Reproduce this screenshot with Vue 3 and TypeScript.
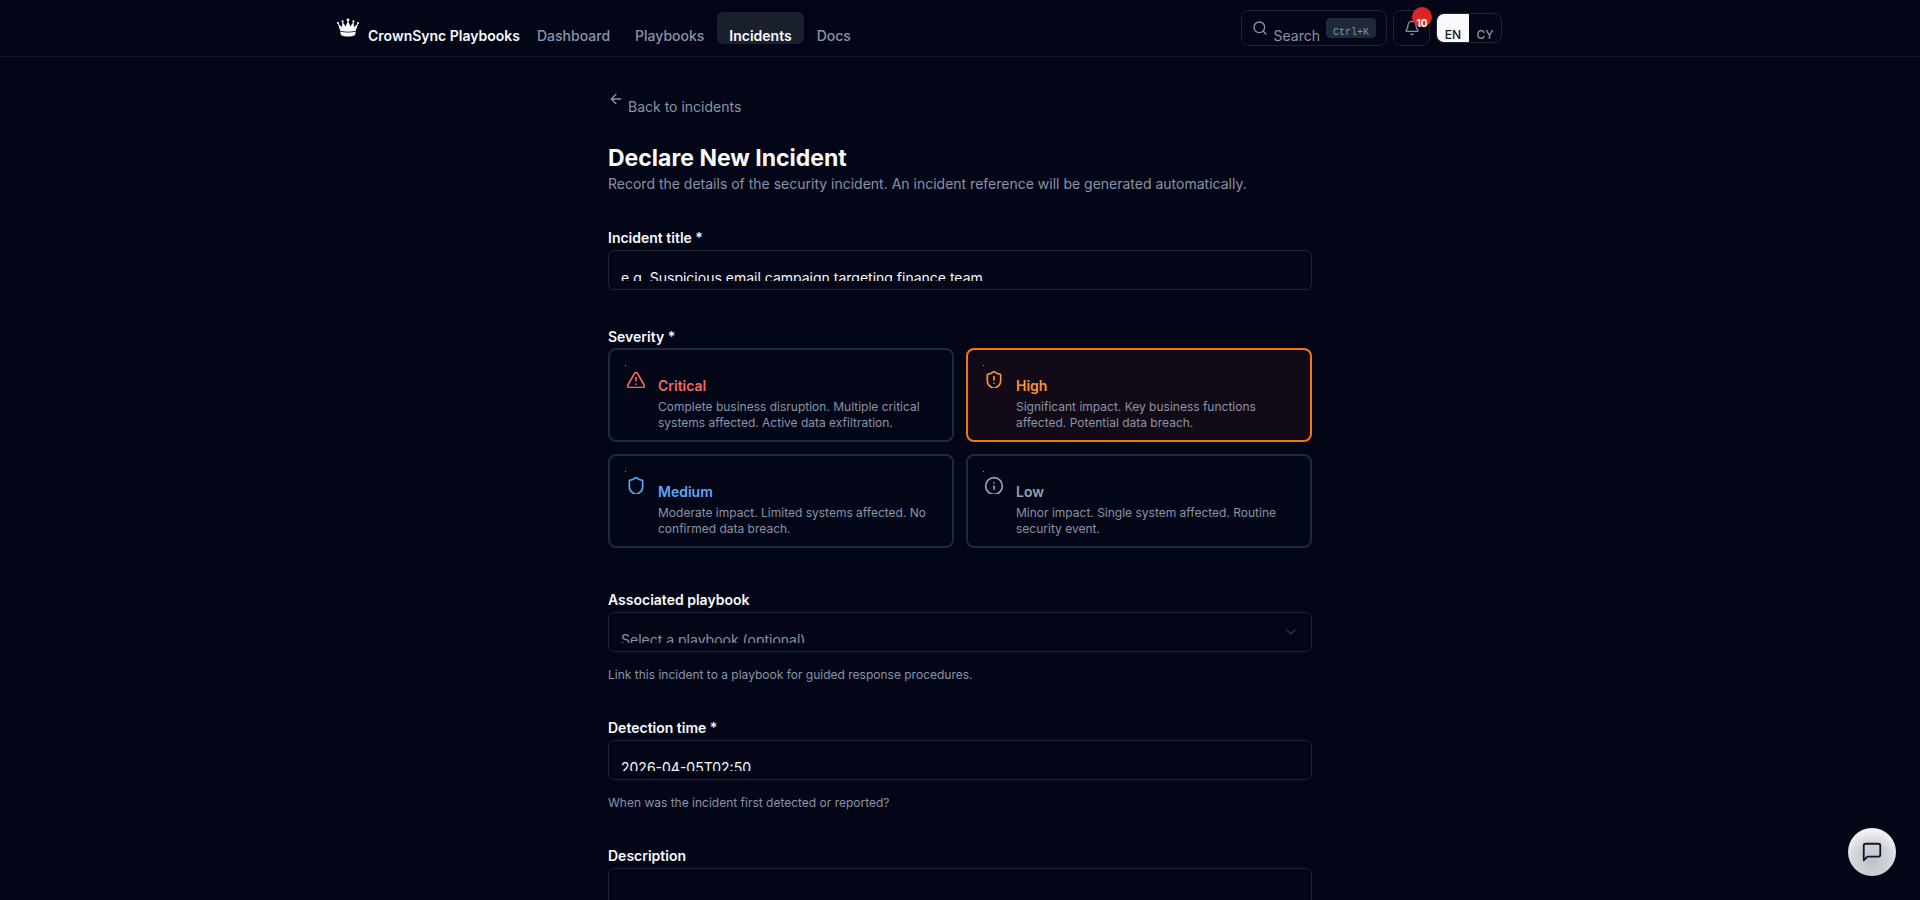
<script setup lang="ts">
import { ref } from 'vue'

interface Severity {
  id: string
  name: string
  text: string
}

const navLinks = ['Dashboard', 'Playbooks', 'Incidents', 'Docs']
const activeLink = 'Incidents'

const severities: Severity[] = [
  { id: 'critical', name: 'Critical', text: 'Complete business disruption. Multiple critical systems affected. Active data exfiltration.' },
  { id: 'high', name: 'High', text: 'Significant impact. Key business functions affected. Potential data breach.' },
  { id: 'medium', name: 'Medium', text: 'Moderate impact. Limited systems affected. No confirmed data breach.' },
  { id: 'low', name: 'Low', text: 'Minor impact. Single system affected. Routine security event.' },
]

const severity = ref('high')
const title = ref('')
const playbook = ref('')
const detectedAt = ref('2026-04-05T02:50')
const description = ref('')
const language = ref('EN')
</script>

<template>
  <div class="page">
    <header class="header">
      <div class="header-inner">
        <a class="brand" href="#">
          <svg class="crown" viewBox="0 0 24 20" fill="currentColor" aria-hidden="true">
            <circle cx="12" cy="2" r="1.4" />
            <circle cx="6.6" cy="3.4" r="1.1" />
            <circle cx="17.4" cy="3.4" r="1.1" />
            <circle cx="2" cy="5" r="1.1" />
            <circle cx="22" cy="5" r="1.1" />
            <path d="M1.8 5.2 6 9 6.4 3.6 9.6 8.4 12 2.4l2.4 6 3.2-4.8L18 9l4.2-3.8-2.4 7.6c-4.8 1.4-10.8 1.4-15.6 0z" />
            <path d="M4.2 13.6c4.8 1.3 10.8 1.3 15.6 0l-.7 3.3c-3.4 2-10.8 2-14.2 0z" />
          </svg>
          <span>CrownSync Playbooks</span>
        </a>
        <nav class="nav">
          <a v-for="link in navLinks" :key="link" href="#" :class="{ active: link === activeLink }">{{ link }}</a>
        </nav>
        <div class="actions">
          <button class="search" type="button">
            <svg class="icon16" viewBox="0 0 24 24" aria-hidden="true"><circle cx="11" cy="11" r="8" /><path d="m21 21-4.3-4.3" /></svg>
            <span>Search</span>
            <kbd>Ctrl+K</kbd>
          </button>
          <button class="bell" type="button" aria-label="Notifications">
            <svg class="icon16" viewBox="0 0 24 24" aria-hidden="true">
              <path d="M10.268 21a2 2 0 0 0 3.464 0" />
              <path d="M3.262 15.326A1 1 0 0 0 4 17h16a1 1 0 0 0 .74-1.673C19.41 13.956 18 12.499 18 8A6 6 0 0 0 6 8c0 4.499-1.411 5.956-2.738 7.326" />
            </svg>
            <span class="badge">10</span>
          </button>
          <div class="language">
            <button v-for="code in ['EN', 'CY']" :key="code" type="button" :class="{ chosen: language === code }" @click="language = code">{{ code }}</button>
          </div>
        </div>
      </div>
    </header>

    <main class="main">
      <a class="back" href="#">
        <svg class="icon16" viewBox="0 0 24 24" aria-hidden="true"><path d="m12 19-7-7 7-7M19 12H5" /></svg>
        <span>Back to incidents</span>
      </a>
      <h1>Declare New Incident</h1>
      <p class="intro">Record the details of the security incident. An incident reference will be generated automatically.</p>

      <form class="form" @submit.prevent>
        <div class="group">
          <label class="label" for="title">Incident title *</label>
          <div class="box">
            <div class="clip">
              <input id="title" v-model="title" type="text" placeholder="e.g. Suspicious email campaign targeting finance team" />
            </div>
          </div>
        </div>

        <fieldset class="group severity">
          <legend class="label">Severity *</legend>
          <div class="cards">
            <label v-for="item in severities" :key="item.id" class="card" :class="[item.id, { selected: severity === item.id }]">
              <input v-model="severity" type="radio" name="severity" :value="item.id" />
              <span class="card-icon">
                <svg viewBox="0 0 24 24" aria-hidden="true">
                  <template v-if="item.id === 'critical'">
                    <path d="m21.73 18-8-14a2 2 0 0 0-3.48 0l-8 14A2 2 0 0 0 4 21h16a2 2 0 0 0 1.73-3M12 9v4M12 17h.01" />
                  </template>
                  <template v-else-if="item.id === 'low'">
                    <circle cx="12" cy="12" r="10" />
                    <path d="M12 16v-4M12 8h.01" />
                  </template>
                  <template v-else>
                    <path d="M20 13c0 5-3.5 7.5-7.66 8.95a1 1 0 0 1-.67-.01C7.5 20.5 4 18 4 13V6a1 1 0 0 1 1-1c2 0 4.5-1.2 6.24-2.72a1.17 1.17 0 0 1 1.52 0C14.51 3.81 17 5 19 5a1 1 0 0 1 1 1z" />
                    <path v-if="item.id === 'high'" d="M12 8v4M12 16h.01" />
                  </template>
                </svg>
              </span>
              <span class="card-body">
                <span class="card-name">{{ item.name }}</span>
                <span class="card-text">{{ item.text }}</span>
              </span>
            </label>
          </div>
        </fieldset>

        <div class="group">
          <label class="label" for="playbook">Associated playbook</label>
          <div class="box">
            <div class="clip">
              <select id="playbook" v-model="playbook">
                <option value="">Select a playbook (optional)</option>
              </select>
            </div>
            <svg class="chevron" viewBox="0 0 24 24" aria-hidden="true"><path d="m6 9 6 6 6-6" /></svg>
          </div>
          <p class="hint">Link this incident to a playbook for guided response procedures.</p>
        </div>

        <div class="group">
          <label class="label" for="detected">Detection time *</label>
          <div class="box">
            <div class="clip">
              <input id="detected" v-model="detectedAt" type="text" />
            </div>
          </div>
          <p class="hint">When was the incident first detected or reported?</p>
        </div>

        <div class="group">
          <label class="label" for="description">Description</label>
          <textarea id="description" v-model="description" rows="5"></textarea>
        </div>
      </form>
    </main>

    <button class="chat" type="button" aria-label="Open chat">
      <svg viewBox="0 0 24 24" aria-hidden="true"><path d="M21 15a2 2 0 0 1-2 2H7l-4 4V5a2 2 0 0 1 2-2h14a2 2 0 0 1 2 2z" /></svg>
    </button>
  </div>
</template>

<style>
html,
body {
  background: #020617;
}

body {
  height: 100vh;
  overflow: hidden;
}
</style>

<style scoped>
.page {
  height: 100vh;
  overflow: hidden;
  background: #020617;
  color: #f8fafc;
  font-family: Inter, "Liberation Sans", sans-serif;
  font-size: 14px;
  line-height: 20px;
}

.page * {
  box-sizing: border-box;
}

a {
  color: inherit;
  text-decoration: none;
}

button,
input,
select,
textarea {
  font: inherit;
  color: inherit;
}

svg {
  flex: none;
  fill: none;
  stroke: currentColor;
  stroke-width: 2;
  stroke-linecap: round;
  stroke-linejoin: round;
}

.icon16 {
  width: 16px;
  height: 16px;
}

.header {
  height: 57px;
  border-bottom: 1px solid #111a29;
}

.header-inner {
  display: flex;
  align-items: center;
  max-width: 1280px;
  height: 100%;
  margin: 0 auto;
  padding: 0 16px;
}

.brand {
  display: flex;
  gap: 8px;
  font-weight: 600;
}

.brand span {
  padding-top: 16px;
}

.crown {
  width: 24px;
  height: 20px;
  margin-top: 8px;
  fill: currentColor;
  stroke: none;
}

.nav {
  display: flex;
  gap: 1px;
  margin-left: 5px;
  color: #8a94a6;
  font-weight: 500;
}

.nav a {
  height: 32px;
  padding: 14px 12px 0;
  line-height: 20px;
  border-radius: 6px;
}

.nav .active {
  background: #1b202e;
  color: #f8fafc;
  font-weight: 600;
}

.actions {
  display: flex;
  align-items: center;
  gap: 6px;
  margin-left: auto;
  padding-right: 82px;
  color: #8a94a6;
}

.search {
  display: flex;
  gap: 6px;
  height: 36px;
  padding: 0 10px;
  border: 1px solid #1e2634;
  border-radius: 8px;
  background: none;
}

.search .icon16 {
  margin-top: 9px;
}

.search span {
  padding-top: 15px;
}

.search kbd {
  height: 20px;
  margin-top: 7px;
  padding: 7px 7px 0;
  border-radius: 4px;
  background: #1e2939;
  font-family: "Liberation Mono", monospace;
  font-size: 10px;
  line-height: 16px;
}

.bell {
  position: relative;
  display: flex;
  justify-content: center;
  width: 37px;
  height: 36px;
  padding: 9px 0;
  border: 1px solid #1e2634;
  border-radius: 8px;
  background: none;
}

.badge {
  position: absolute;
  top: -4px;
  right: -3px;
  width: 20px;
  height: 20px;
  padding-top: 8px;
  border-radius: 10px;
  background: #dc2626;
  color: #ffffff;
  font-size: 10px;
  font-weight: 700;
  line-height: 16px;
}

.language {
  display: flex;
  height: 30px;
  border: 1px solid #1e2634;
  border-radius: 8px;
  overflow: hidden;
}

.language button {
  width: 32px;
  padding: 13px 0 0;
  border: 0;
  background: none;
  font-size: 12px;
  font-weight: 500;
  line-height: 16px;
}

.language .chosen {
  background: #f8fafc;
  color: #0f172a;
}

.main {
  max-width: 704px;
  margin: 0 auto;
  padding-top: 34px;
}

.back {
  display: flex;
  gap: 4px;
  width: fit-content;
  color: #8a94a6;
}

.back span {
  padding-top: 6px;
}

h1 {
  margin: 25px 0 0;
  font-size: 23px;
  font-weight: 700;
  line-height: 32px;
}

.intro {
  margin: 0;
  color: #8a94a6;
}

.form {
  display: flex;
  flex-direction: column;
  gap: 35px;
  margin-top: 34px;
}

.group {
  display: flex;
  flex-direction: column;
  min-width: 0;
  margin: 0;
  padding: 0;
  border: 0;
}

.label {
  margin-bottom: 2px;
  padding: 0;
  font-weight: 600;
}

.box {
  position: relative;
  height: 40px;
  padding: 0 12px 8px;
  border: 1px solid #1e2634;
  border-radius: 6px;
}

.clip {
  height: 30px;
  overflow: hidden;
}

.box input,
.box select {
  display: block;
  width: 100%;
  height: 20px;
  margin-top: 17px;
  padding: 0;
  border: 0;
  outline: 0;
  background: none;
  appearance: none;
}

.box select {
  color: #8a94a6;
}

.box input::placeholder {
  color: #f8fafc;
  opacity: 1;
}

.chevron {
  position: absolute;
  top: 11px;
  right: 12px;
  width: 16px;
  height: 16px;
  color: #2c3544;
}

.severity {
  margin-top: 2px;
  padding-bottom: 7px;
}

.severity .label {
  margin-bottom: 1px;
}

.cards {
  display: grid;
  grid-template-columns: 1fr 1fr;
  gap: 12px;
}

.card {
  display: flex;
  height: 94px;
  padding: 15px;
  border: 2px solid #1e2939;
  border-radius: 8px;
}

.card input {
  flex: none;
  width: 1px;
  height: 1px;
  margin: 0;
  appearance: none;
  background: #8a94a6;
}

.card-icon {
  flex: none;
  height: 18px;
  margin-top: 5px;
  overflow: hidden;
}

.card-icon svg {
  display: block;
  width: 20px;
  height: 20px;
}

.card-body {
  display: flex;
  flex-direction: column;
  margin: 11px 0 0 12px;
}

.card-name {
  font-weight: 600;
}

.card-text {
  margin-top: 3px;
  color: #8a94a6;
  font-size: 12px;
  line-height: 16px;
}

.critical .card-icon,
.critical .card-name {
  color: #f4695f;
}

.high .card-icon,
.high .card-name {
  color: #fb923c;
}

.medium .card-icon,
.medium .card-name {
  color: #60a5fa;
}

.low .card-icon,
.low .card-name {
  color: #99a1af;
}

.selected {
  border-color: #f97316;
  background: #120b17;
}

.hint {
  margin: 15px 0 0;
  color: #8a94a6;
  font-size: 12px;
  line-height: 16px;
}

textarea {
  display: block;
  width: 100%;
  padding: 8px 12px;
  border: 1px solid #1e2634;
  border-radius: 6px;
  background: none;
  resize: none;
}

.chat {
  position: fixed;
  right: 24px;
  bottom: 24px;
  display: flex;
  align-items: center;
  justify-content: center;
  width: 48px;
  height: 48px;
  padding: 0;
  border: 0;
  border-radius: 50%;
  background: radial-gradient(circle at 50% 70%, #bfc2c8 0%, #d3d5d9 45%, #f1f2f5 75%, #ffffff 100%);
  color: #0f172a;
}

.chat svg {
  width: 22px;
  height: 22px;
}
</style>
